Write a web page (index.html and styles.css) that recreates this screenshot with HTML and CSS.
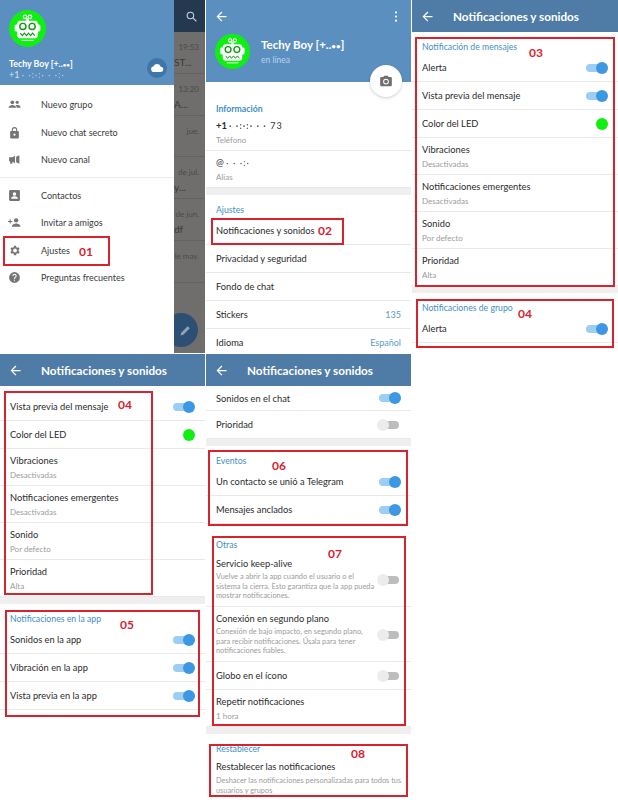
FILE: index.html
```html
<!DOCTYPE html>
<html lang="es">
<head>
    <meta charset="UTF-8">
    <meta name="viewport" content="width=device-width, initial-scale=1.0">
    <title>Notificaciones y sonidos</title>
    <link rel="stylesheet" href="styles.css">
</head>
<body>
    <!-- Iconos compartidos -->
    <svg class="defs" width="0" height="0">
        <symbol id="robot" viewBox="0 0 36 36">
            <circle cx="18" cy="18" r="18" fill="#0ff012"/>
            <circle cx="15.6" cy="6.6" r="1.7" fill="none" stroke="#fff" stroke-width="1.2"/>
            <circle cx="20.4" cy="6.6" r="1.7" fill="none" stroke="#fff" stroke-width="1.2"/>
            <rect x="16.8" y="8" width="2.4" height="3" fill="#fff"/>
            <rect x="5.5" y="14" width="4" height="7" rx="1.5" fill="#fff"/>
            <rect x="26.5" y="14" width="4" height="7" rx="1.5" fill="#fff"/>
            <rect x="8" y="10.5" width="20" height="17" rx="3" fill="#fff"/>
            <circle cx="13.5" cy="16" r="3" fill="#fff" stroke="#0c9a10" stroke-width="1.4"/>
            <circle cx="22.5" cy="16" r="3" fill="#fff" stroke="#0c9a10" stroke-width="1.4"/>
            <path d="M11 22.5l2 2.5 2-2.5 2 2.5 2-2.5 2 2.5 2-2.5 2 2.5" fill="none" stroke="#0c9a10" stroke-width="1"/>
            <rect x="12" y="29" width="12" height="1.2" fill="#fff" opacity=".8"/>
        </symbol>
        <symbol id="back" viewBox="0 0 24 24">
            <path d="M20 11H7.8l5.6-5.6L12 4l-8 8 8 8 1.4-1.4L7.8 13H20z" fill="#fff"/>
        </symbol>
    </svg>

    <main class="collage">
        <!-- Menú lateral -->
        <section class="panel panel-drawer">
            <div class="chat-behind">
                <div class="chat-bar">
                    <svg class="search" viewBox="0 0 24 24"><circle cx="10" cy="10" r="6" fill="none" stroke="#c9d2da" stroke-width="2"/><path d="M15 15l6 6" stroke="#c9d2da" stroke-width="2.4"/></svg>
                </div>
                <div class="chat-row"><span class="chat-time">19:53</span><span class="chat-text">ST...</span></div>
                <div class="chat-row"><span class="chat-time">13:20</span><span class="chat-text">A...</span></div>
                <div class="chat-row"><span class="chat-time">jue.</span></div>
                <div class="chat-row"><span class="chat-time">de jul.</span><span class="chat-text">y...</span></div>
                <div class="chat-row"><span class="chat-time">de jun.</span><span class="chat-text">df</span></div>
                <div class="chat-row"><span class="chat-time">le may.</span></div>
                <div class="fab">
                    <svg viewBox="0 0 24 24"><path d="M3 21l1-5L16 4l4 4L8 20z" fill="#8fa3b5"/></svg>
                </div>
            </div>
            <div class="drawer">
                <div class="drawer-head">
                    <svg class="drawer-avatar"><use href="#robot"/></svg>
                    <div class="drawer-name">Techy Boy [+..<span class="dots">••</span>]</div>
                    <div class="drawer-phone">+1 <span class="masked">· ·:·:· · ·:·</span></div>
                    <div class="cloud">
                        <svg viewBox="0 0 24 24"><path d="M7 19a5 5 0 0 1-1-9.9A6.5 6.5 0 0 1 18.4 10 4.5 4.5 0 0 1 18 19z" fill="#fff"/></svg>
                    </div>
                </div>
                <ul class="menu">
                    <li><svg viewBox="0 0 24 24"><circle cx="8" cy="8" r="3.5"/><circle cx="17" cy="8" r="3"/><path d="M1 18c0-3 4-5 7-5s7 2 7 5zM16 18c0-2-1-3.500-2-4.500 3-1 9 0 9 3v1.500z"/></svg>Nuevo grupo</li>
                    <li><svg viewBox="0 0 24 24"><path d="M18 9h-1V7A5 5 0 0 0 7 7v2H6a2 2 0 0 0-2 2v10a2 2 0 0 0 2 2h12a2 2 0 0 0 2-2V11a2 2 0 0 0-2-2zM9 7a3 3 0 0 1 6 0v2H9zm3 11a2 2 0 1 1 0-4 2 2 0 0 1 0 4z"/></svg>Nuevo chat secreto</li>
                    <li><svg viewBox="0 0 24 24"><path d="M13 5v14l-5-3v4H4v-5H2V8h6zM15 7l6-3v16l-6-3z"/></svg>Nuevo canal</li>
                    <li class="menu-rule"></li>
                    <li><svg viewBox="0 0 24 24"><path d="M4 2h16a2 2 0 0 1 2 2v16a2 2 0 0 1-2 2H4a2 2 0 0 1-2-2V4a2 2 0 0 1 2-2zm8 4a3.200 3.200 0 1 0 0 6.400A3.200 3.200 0 0 0 12 6zm-6 12h12v-1.500c0-2-4-3-6-3s-6 1-6 3z" fill-rule="evenodd"/></svg>Contactos</li>
                    <li><svg viewBox="0 0 24 24"><circle cx="15" cy="8" r="4"/><path d="M7 20c0-4 5-6 8-6s8 2 8 6zM5 9V6H3v3H0v2h3v3h2v-3h3V9z"/></svg>Invitar a amigos</li>
                    <li><svg viewBox="0 0 24 24"><path d="M19.400 13a7.500 7.500 0 0 0 0-2l2.100-1.600-2-3.500-2.500 1a7.600 7.600 0 0 0-1.700-1L15 3.200h-4l-.4 2.700a7.600 7.600 0 0 0-1.700 1l-2.500-1-2 3.500L6.500 11a7.500 7.500 0 0 0 0 2l-2.100 1.600 2 3.500 2.500-1a7.600 7.600 0 0 0 1.700 1l.4 2.700h4l.4-2.700a7.600 7.600 0 0 0 1.700-1l2.500 1 2-3.500zM13 15.500a3.500 3.500 0 1 1 0-7 3.500 3.500 0 0 1 0 7z"/></svg>Ajustes</li>
                    <li><svg viewBox="0 0 24 24"><path d="M12 2a10 10 0 1 0 0 20 10 10 0 0 0 0-20zm1 17h-2v-2h2zm2.100-7.700l-.9.900c-.8.700-1.200 1.300-1.200 2.800h-2v-.5c0-1.100.4-2.100 1.200-2.800l1.200-1.300A2 2 0 0 0 12 7a2 2 0 0 0-2 2H8a4 4 0 0 1 8 0c0 .9-.4 1.700-.9 2.300z"/></svg>Preguntas frecuentes</li>
                </ul>
            </div>
            <div class="mark mark-01"><span>01</span></div>
        </section>

        <!-- Ajustes -->
        <section class="panel panel-settings">
            <header class="profile">
                <div class="profile-top">
                    <svg class="icon-back"><use href="#back"/></svg>
                    <svg class="icon-dots" viewBox="0 0 4 16"><circle cx="2" cy="2" r="1.500" fill="#fff"/><circle cx="2" cy="8" r="1.500" fill="#fff"/><circle cx="2" cy="14" r="1.500" fill="#fff"/></svg>
                </div>
                <div class="profile-main">
                    <svg class="profile-avatar"><use href="#robot"/></svg>
                    <div>
                        <div class="profile-name">Techy Boy [+..<span class="dots">••</span>]</div>
                        <div class="profile-status">en línea</div>
                    </div>
                </div>
                <div class="camera">
                    <svg viewBox="0 0 24 24"><path d="M9 3L7.200 5H4a2 2 0 0 0-2 2v12a2 2 0 0 0 2 2h16a2 2 0 0 0 2-2V7a2 2 0 0 0-2-2h-3.200L15 3zm3 15a5 5 0 1 1 0-10 5 5 0 0 1 0 10z" fill="#6f6f6f"/><circle cx="12" cy="13" r="3.200" fill="#6f6f6f"/></svg>
                </div>
            </header>
            <h2 class="section-title first-info">Información</h2>
            <div class="row row-sub"><div class="label phone">+1 <span class="masked">· ·:·:· · · 73</span></div><div class="sub">Teléfono</div></div>
            <div class="row row-sub"><div class="label">@ <span class="masked">· · ·:·</span></div><div class="sub">Alias</div></div>
            <div class="band"></div>
            <h2 class="section-title">Ajustes</h2>
            <div class="row"><span class="label">Notificaciones y sonidos</span></div>
            <div class="row"><span class="label">Privacidad y seguridad</span></div>
            <div class="row"><span class="label">Fondo de chat</span></div>
            <div class="row"><span class="label">Stickers</span><span class="value">135</span></div>
            <div class="row row-plain"><span class="label">Idioma</span><span class="value">Español</span></div>
            <div class="mark mark-02"><span>02</span></div>
        </section>

        <!-- Notificaciones, primera captura -->
        <section class="panel">
            <header class="toolbar"><svg class="icon-back"><use href="#back"/></svg><h1>Notificaciones y sonidos</h1></header>
            <h2 class="section-title">Notificación de mensajes</h2>
            <div class="row"><span class="label">Alerta</span><span class="toggle"></span></div>
            <div class="row"><span class="label">Vista previa del mensaje</span><span class="toggle"></span></div>
            <div class="row"><span class="label">Color del LED</span><span class="led"></span></div>
            <div class="row row-sub"><div class="label">Vibraciones</div><div class="sub">Desactivadas</div></div>
            <div class="row row-sub"><div class="label">Notificaciones emergentes</div><div class="sub">Desactivadas</div></div>
            <div class="row row-sub"><div class="label">Sonido</div><div class="sub">Por defecto</div></div>
            <div class="row row-sub"><div class="label">Prioridad</div><div class="sub">Alta</div></div>
            <div class="band"></div>
            <h2 class="section-title">Notificaciones de grupo</h2>
            <div class="row"><span class="label">Alerta</span><span class="toggle"></span></div>
            <div class="mark mark-03"><span>03</span></div>
            <div class="mark mark-04a"><span>04</span></div>
        </section>

        <!-- Notificaciones, segunda captura -->
        <section class="panel">
            <header class="toolbar"><svg class="icon-back"><use href="#back"/></svg><h1>Notificaciones y sonidos</h1></header>
            <div class="row scrolled"><span class="label">Vista previa del mensaje</span><span class="toggle"></span></div>
            <div class="row"><span class="label">Color del LED</span><span class="led"></span></div>
            <div class="row row-sub"><div class="label">Vibraciones</div><div class="sub">Desactivadas</div></div>
            <div class="row row-sub"><div class="label">Notificaciones emergentes</div><div class="sub">Desactivadas</div></div>
            <div class="row row-sub"><div class="label">Sonido</div><div class="sub">Por defecto</div></div>
            <div class="row row-sub"><div class="label">Prioridad</div><div class="sub">Alta</div></div>
            <div class="band"></div>
            <h2 class="section-title">Notificaciones en la app</h2>
            <div class="row"><span class="label">Sonidos en la app</span><span class="toggle"></span></div>
            <div class="row"><span class="label">Vibración en la app</span><span class="toggle"></span></div>
            <div class="row"><span class="label">Vista previa en la app</span><span class="toggle"></span></div>
            <div class="mark mark-04b"><span>04</span></div>
            <div class="mark mark-05"><span>05</span></div>
        </section>

        <!-- Notificaciones, tercera captura -->
        <section class="panel">
            <header class="toolbar"><svg class="icon-back"><use href="#back"/></svg><h1>Notificaciones y sonidos</h1></header>
            <div class="row row-cut"><span class="label">Sonidos en el chat</span><span class="toggle"></span></div>
            <div class="row"><span class="label">Prioridad</span><span class="toggle off"></span></div>
            <div class="band"></div>
            <h2 class="section-title">Eventos</h2>
            <div class="row"><span class="label">Un contacto se unió a Telegram</span><span class="toggle"></span></div>
            <div class="row"><span class="label">Mensajes anclados</span><span class="toggle"></span></div>
            <div class="gap"></div>
            <h2 class="section-title">Otras</h2>
            <div class="row row-long">
                <div class="long-text">
                    <div class="label">Servicio keep-alive</div>
                    <div class="desc">Vuelve a abrir la app cuando el usuario o el sistema la cierra. Esto garantiza que la app pueda mostrar notificaciones.</div>
                </div>
                <span class="toggle off"></span>
            </div>
            <div class="row row-long">
                <div class="long-text">
                    <div class="label">Conexión en segundo plano</div>
                    <div class="desc">Conexión de bajo impacto, en segundo plano, para recibir notificaciones. Úsala para tener notificaciones fiables.</div>
                </div>
                <span class="toggle off"></span>
            </div>
            <div class="row"><span class="label">Globo en el ícono</span><span class="toggle off"></span></div>
            <div class="row row-sub"><div class="label">Repetir notificaciones</div><div class="sub">1 hora</div></div>
            <div class="band"></div>
            <h2 class="section-title">Restablecer</h2>
            <div class="row-reset">
                <div class="label">Restablecer las notificaciones</div>
                <div class="desc">Deshacer las notificaciones personalizadas para todos tus usuarios y grupos</div>
            </div>
            <div class="mark mark-06"><span>06</span></div>
            <div class="mark mark-07"><span>07</span></div>
            <div class="mark mark-08"><span>08</span></div>
        </section>
    </main>
</body>
</html>
```

FILE: styles.css
```css
/* Estilos generales */
body {
    margin: 0;
    background-color: white;
    font-family: Lato, "Liberation Sans", sans-serif;
    color: #2b2b2b;
    overflow: hidden;
}

.defs {
    position: absolute;
}

.collage {
    display: grid;
    grid-template-columns: 205px 205px 206px;
    grid-template-rows: 354px 446px;
    column-gap: 1px;
    width: 618px;
    height: 800px;
    overflow: hidden;
}

.panel {
    position: relative;
    overflow: hidden;
    background-color: white;
}

/* Menú lateral */
.panel-drawer {
    display: flex;
    height: 353px;
}

.drawer {
    position: absolute;
    left: 0;
    top: 0;
    width: 174px;
    height: 353px;
    background-color: white;
}

.drawer-head {
    position: relative;
    height: 85px;
    background-color: #5b8fc0;
    color: white;
}

.drawer-avatar {
    position: absolute;
    left: 9px;
    top: 10px;
    width: 37px;
    height: 37px;
}

.drawer-name {
    position: absolute;
    left: 9px;
    top: 57px;
    font-size: 8.800px;
    line-height: 13px;
    font-weight: 700;
}

.dots {
    font-size: .7em;
}

.drawer-phone {
    position: absolute;
    left: 9px;
    top: 69px;
    font-size: 9px;
    line-height: 12px;
    color: #d3e3f2;
}

.masked {
    letter-spacing: 1px;
    opacity: .75;
    filter: blur(.4px);
}

.cloud {
    position: absolute;
    left: 147px;
    top: 58px;
    display: flex;
    align-items: center;
    justify-content: center;
    width: 20px;
    height: 20px;
    border-radius: 50%;
    background-color: #3f76a8;
}

.cloud svg {
    width: 14px;
    height: 14px;
}

.menu {
    margin: 0;
    padding: 6px 0 0;
    list-style: none;
}

.menu li {
    display: flex;
    align-items: center;
    height: 27.5px;
    padding-left: 41px;
    position: relative;
    font-size: 9px;
    color: #3a3a3a;
}

.menu li svg {
    position: absolute;
    left: 8px;
    top: 7px;
    width: 13px;
    height: 13px;
    fill: #757575;
}

.menu .menu-rule {
    height: 0;
    margin: 3px 0 4px -41px;
    border-top: 1px solid #ececec;
}

/* Lista de chats detrás del menú */
.chat-behind {
    position: relative;
    margin-left: 174px;
    width: 31px;
    height: 353px;
    background-color: #6f6e6c;
    overflow: hidden;
}

.chat-bar {
    display: flex;
    justify-content: flex-end;
    align-items: center;
    height: 32px;
    padding-right: 7px;
    box-sizing: border-box;
    background-color: #24394f;
}

.search {
    width: 13px;
    height: 13px;
}

.chat-row {
    display: flex;
    flex-direction: column;
    height: 41.8px;
    padding-top: 10px;
    box-sizing: border-box;
    border-bottom: 1px solid #646361;
    font-size: 8px;
    color: #4a4a48;
}

.chat-time {
    align-self: flex-end;
    padding-right: 6px;
    white-space: nowrap;
}

.chat-text {
    margin-top: 4px;
    font-size: 10px;
    color: #393938;
}

.fab {
    position: absolute;
    left: -10px;
    top: 313px;
    display: flex;
    align-items: center;
    justify-content: center;
    width: 34px;
    height: 34px;
    border-radius: 50%;
    background-color: #2d4f73;
}

.fab svg {
    width: 13px;
    height: 13px;
    margin-left: 8px;
}

/* Cabecera de perfil */
.profile {
    position: relative;
    height: 82px;
    background-color: #5b8fc0;
    color: white;
}

.profile-top {
    display: flex;
    justify-content: space-between;
    align-items: center;
    height: 32px;
    padding: 0 13px 0 8px;
}

.profile-top .icon-dots {
    width: 4px;
    height: 11px;
}

.profile-main {
    display: flex;
    align-items: center;
    gap: 11px;
    padding: 2px 0 0 9px;
}

.profile-avatar {
    width: 35px;
    height: 35px;
}

.profile-name {
    font-size: 11.500px;
    line-height: 15px;
    font-weight: 700;
}

.profile-status {
    font-size: 8.500px;
    line-height: 11px;
    margin-top: 1px;
    color: #b9d3ea;
}

.camera {
    position: absolute;
    right: 9px;
    top: 65px;
    display: flex;
    align-items: center;
    justify-content: center;
    width: 32px;
    height: 32px;
    border-radius: 50%;
    background-color: white;
    box-shadow: 0 1px 3px rgba(0,0,0,.2);
}

.camera svg {
    width: 14px;
    height: 14px;
}

/* Barra de título */
.toolbar {
    display: flex;
    align-items: center;
    height: 32px;
    padding-left: 8px;
    background-color: #4f7ca6;
}

.icon-back {
    width: 15px;
    height: 15px;
    flex: none;
}

.toolbar h1 {
    margin: 0 0 0 18px;
    font-size: 11.700px;
    font-weight: 700;
    color: white;
    white-space: nowrap;
}

/* Filas y secciones */
.section-title {
    margin: 0;
    padding: 9px 10px 2px;
    font-size: 8.700px;
    line-height: 11px;
    font-weight: 400;
    color: #3f8fc4;
}

.first-info {
    padding: 21px 10px 0;
    font-weight: 700;
}

.row {
    display: flex;
    align-items: center;
    justify-content: space-between;
    height: 28px;
    padding: 0 10px;
    box-sizing: border-box;
    border-bottom: 1px solid #e9e9e9;
}

.row-plain {
    height: 26px;
    border-bottom: none;
}

.row-sub {
    display: block;
    height: 37px;
    padding-top: 5px;
}

.row-cut {
    height: 25px;
}

.row-long {
    align-items: flex-start;
    height: 55px;
    padding-top: 5px;
}

.row-long .toggle {
    margin-top: 19px;
}

.row-reset {
    padding: 4px 0 0 10px;
}

.row-reset .desc {
    margin-top: 3px;
}

.scrolled {
    margin-top: 7px;
}

.label {
    font-size: 9.300px;
    line-height: 13px;
    color: #2b2b2b;
}

.phone {
    font-weight: 700;
}

.sub {
    margin-top: 3px;
    font-size: 8px;
    line-height: 11px;
    color: #9b9b9b;
}

.desc {
    margin-top: 2px;
    font-size: 7.400px;
    line-height: 9.500px;
    color: #9b9b9b;
}

.long-text {
    width: 160px;
}

.value {
    font-size: 9px;
    color: #5b9bc9;
}

.band {
    height: 7px;
    background-color: #efefef;
}

.gap {
    height: 6px;
}

/* Interruptores */
.toggle {
    position: relative;
    flex: none;
    width: 20px;
    height: 8px;
    margin-right: 2px;
    border-radius: 4px;
    background-color: #9ccdf3;
}

.toggle::after {
    content: "";
    position: absolute;
    right: -2px;
    top: -2px;
    width: 12px;
    height: 12px;
    border-radius: 50%;
    background-color: #3d97e3;
}

.toggle.off {
    background-color: #bdbdbd;
}

.toggle.off::after {
    right: auto;
    left: -2px;
    background-color: #ececec;
}

.led {
    flex: none;
    width: 12px;
    height: 12px;
    border-radius: 50%;
    background-color: #0ff012;
}

/* Recuadros rojos sobre las capturas */
.mark {
    position: absolute;
    box-sizing: border-box;
    border: 2px solid #d8232f;
}

.mark span {
    position: absolute;
    font-size: 12px;
    line-height: 14px;
    font-weight: 700;
    color: #d8232f;
}

.mark-01 { left: 3px; top: 236px; width: 107px; height: 30px; }
.mark-01 span { left: 74px; top: 7px; }

.mark-02 { left: 5px; top: 218px; width: 133px; height: 27px; }
.mark-02 span { left: 105px; top: 4px; }

.mark-03 { left: 3px; top: 37px; width: 200px; height: 250px; }
.mark-03 span { left: 112px; top: 7px; }

.mark-04a { left: 4px; top: 299px; width: 198px; height: 49px; }
.mark-04a span { left: 100px; top: 6px; }

.mark-04b { left: 4px; top: 37px; width: 149px; height: 204px; }
.mark-04b span { left: 112px; top: 5px; }

.mark-05 { left: 5px; top: 256px; width: 195px; height: 107px; }
.mark-05 span { left: 113px; top: 6px; }

.mark-06 { left: 2px; top: 96px; width: 200px; height: 76px; }
.mark-06 span { left: 62px; top: 7px; }

.mark-07 { left: 6px; top: 182px; width: 194px; height: 190px; }
.mark-07 span { left: 114px; top: 9px; }

.mark-08 { left: 3px; top: 390px; width: 199px; height: 53px; }
.mark-08 span { left: 140px; top: 1px; }
```
